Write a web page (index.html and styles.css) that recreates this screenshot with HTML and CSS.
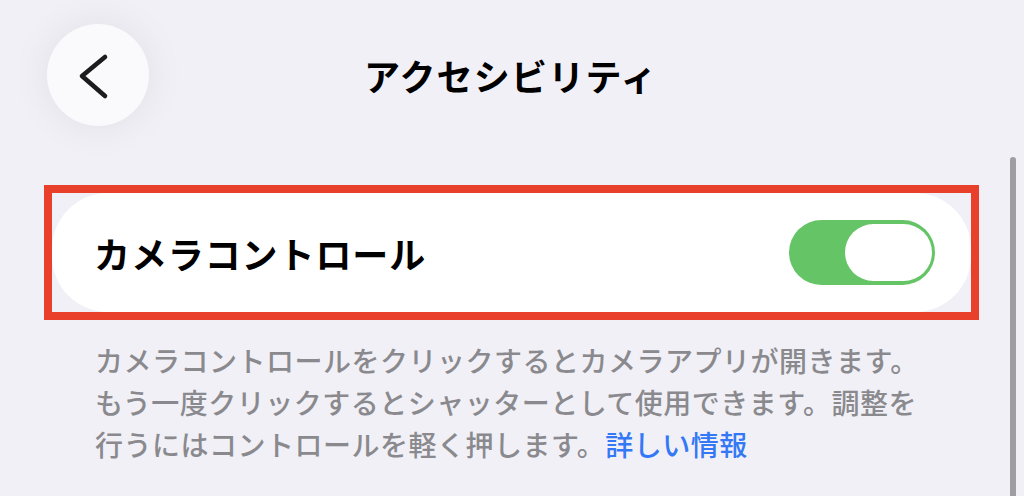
FILE: index.html
```html
<!DOCTYPE html>
<html lang="ja">
<head>
    <meta charset="UTF-8">
    <meta name="viewport" content="width=device-width, initial-scale=1.0">
    <title>アクセシビリティ</title>
    <link rel="stylesheet" href="styles.css">
</head>
<body>
    <div id="header">
        <div class="back-button">
            <svg width="102" height="102" viewBox="0 0 102 102">
                <polyline points="58,33 35,52 58,72" fill="none" stroke="#1c1c1e" stroke-width="4.6" stroke-linecap="round" stroke-linejoin="round"/>
            </svg>
        </div>
        <h1 class="title">アクセシビリティ</h1>
    </div>

    <div class="highlight">
        <div class="card">
            <span class="card-label">カメラコントロール</span>
            <div class="toggle">
                <div class="toggle-knob"></div>
            </div>
        </div>
    </div>

    <p class="description">カメラコントロールをクリックするとカメラアプリが開きます。もう一度クリックするとシャッターとして使用できます。調整を行うにはコントロールを軽く押します。<a href="#" class="more-link">詳しい情報</a></p>

    <div class="scrollbar"></div>
</body>
</html>
```

FILE: styles.css
```css
body {
    margin: 0;
    background-color: #f1f0f6;
    font-family: "Noto Sans CJK JP", "Noto Sans", sans-serif;
    width: 1024px;
    height: 496px;
    overflow: hidden;
}
#header {
    display: flex;
    align-items: center;
    height: 102px;
    padding: 24px 0 0 47px;
}
.back-button {
    width: 102px;
    height: 102px;
    border-radius: 50%;
    background-color: #fafafd;
    box-shadow: 0 0 40px rgba(0, 0, 0, 0.07);
    flex-shrink: 0;
}
.back-button svg {
    display: block;
}
.title {
    margin: 0 0 0 215px;
    font-size: 36px;
    font-weight: 700;
    color: #000;
    line-height: 1;
    letter-spacing: 1.2px;
}
.highlight {
    margin: 59px 0 0 44px;
    width: 919px;
    border: 8px solid #e8402a;
}
.card {
    display: flex;
    align-items: center;
    justify-content: space-between;
    height: 119px;
    padding: 0 36px 0 42px;
    background-color: #fff;
    border-radius: 56px;
}
.card-label {
    font-size: 36px;
    font-weight: 700;
    color: #000;
    letter-spacing: 0.9px;
}
.toggle {
    width: 146px;
    height: 65px;
    border-radius: 33px;
    background-color: #65c466;
    display: flex;
    align-items: center;
    justify-content: flex-end;
    padding-right: 3px;
    box-sizing: border-box;
}
.toggle-knob {
    width: 87px;
    height: 57px;
    border-radius: 29px;
    background-color: #fff;
}
.description {
    margin: 19px 0 0 95px;
    width: 840px;
    font-size: 28px;
    line-height: 42px;
    color: #8a8a8e;
    font-weight: 500;
    letter-spacing: 0.5px;
}
.more-link {
    color: #3478f6;
    text-decoration: none;
}
.scrollbar {
    position: absolute;
    left: 1010px;
    top: 157px;
    width: 6px;
    height: 360px;
    border-radius: 3px;
    background-color: #9f9fa1;
}
```
